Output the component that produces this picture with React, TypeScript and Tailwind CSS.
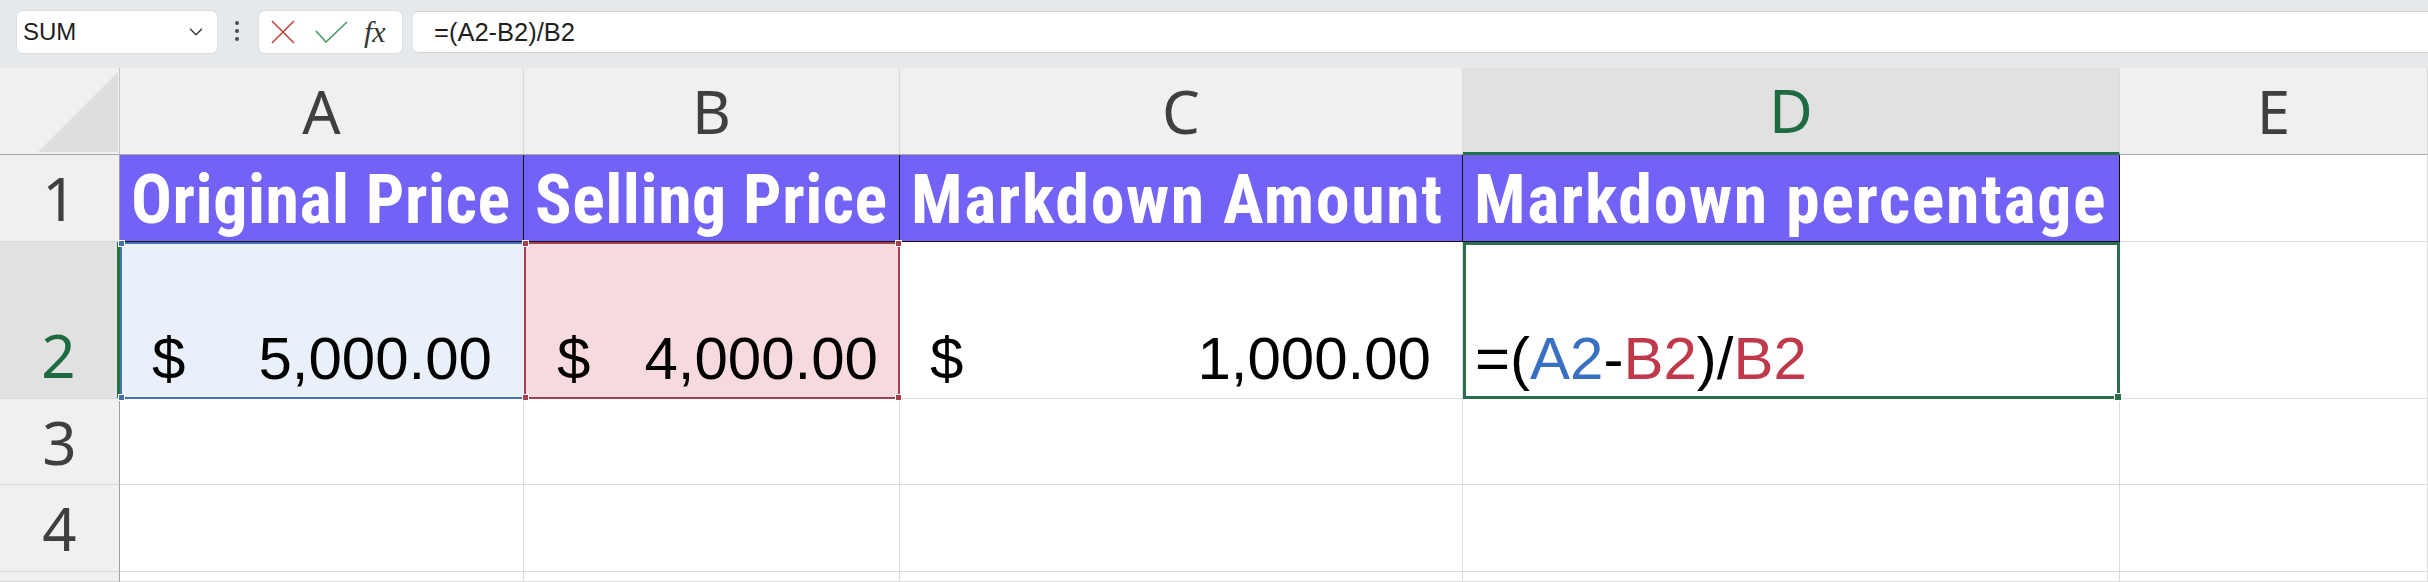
import React from 'react';
import { ChevronDown } from 'lucide-react';

const narrow = "font-['Roboto_Condensed','Roboto',sans-serif]";
const sans = "font-['Liberation_Sans',Arial,sans-serif]";
const ui = "font-['Noto_Sans',sans-serif]";

const Handle = ({ pos, color }: { pos: string; color: string }) => (
  <span className={`absolute z-10 h-[7px] w-[7px] border border-white ${pos} ${color}`} />
);

const ColHead = ({ label, active }: { label: string; active?: boolean }) => (
  <div
    className={`flex items-center justify-center border-r border-[#dadada] ${ui} text-[60px] leading-none ${
      active
        ? 'border-b-[3px] border-b-[#217346] bg-[#e1e1e1] text-[#1e6b42]'
        : 'border-b border-b-[#a8a8a8] bg-[#f0f0f0] text-[#3f3f3f]'
    }`}
  >
    {label}
  </div>
);

const RowHead = ({ label }: { label: string }) => (
  <div
    className={`flex items-center justify-center border-r border-b border-r-[#9e9e9e] border-b-[#d6d6d6] bg-[#f0f0f0] ${ui} text-[60px] leading-none text-[#3f3f3f]`}
  >
    {label}
  </div>
);

const Title = ({ text, wide }: { text: string; wide?: boolean }) => (
  <div
    className={`flex items-center overflow-hidden whitespace-nowrap border-r border-b border-[#141414] bg-[#7262f6] pl-[11px] pt-[4px] ${narrow} text-[68px] font-bold leading-none text-white ${
      wide ? 'tracking-[1.6px]' : 'tracking-[0.5px]'
    }`}
  >
    {text}
  </div>
);

const Blank = () => <div className="border-r border-b border-[#dcdcdc] bg-white" />;

export default function App() {
  return (
    <div className="h-[582px] w-[2428px] overflow-hidden bg-white">
      {/* formula bar */}
      <div className="flex h-[68px] items-start bg-[#e6e9eb] pt-[11px]">
        <div className="ml-[17px] flex h-[42px] w-[200px] items-center justify-between rounded-[6px] bg-white pl-[6px] pr-[10px] shadow-[0_0_0_1px_#dde0e3]">
          <span className={`${sans} text-[24px] text-[#1f1f1f]`}>SUM</span>
          <ChevronDown size={22} strokeWidth={1.6} className="text-[#3a3a3a]" />
        </div>
        <div className="ml-[18px] mt-[10px] flex flex-col gap-[4px]">
          <span className="h-[4px] w-[4px] rounded-full bg-[#4d4d4d]" />
          <span className="h-[4px] w-[4px] rounded-full bg-[#4d4d4d]" />
          <span className="h-[4px] w-[4px] rounded-full bg-[#4d4d4d]" />
        </div>
        <div className="ml-[20px] flex h-[42px] w-[143px] items-center rounded-[6px] bg-white pl-[12px] shadow-[0_0_0_1px_#dde0e3]">
          <svg width="24" height="24" viewBox="0 0 24 24" className="shrink-0">
            <path d="M1 1 L23 23 M23 1 L1 23" stroke="#c8433f" strokeWidth="1.6" fill="none" />
          </svg>
          <svg width="33" height="22" viewBox="0 0 33 22" className="ml-[20px] shrink-0">
            <path d="M1 10 L11 21 L32 1" stroke="#4b9a65" strokeWidth="1.6" fill="none" />
          </svg>
          <span className="ml-[16px] font-['Liberation_Serif',serif] text-[30px] italic leading-none text-[#333]">
            fx
          </span>
        </div>
        <div className="ml-[11px] flex h-[42px] flex-1 items-center rounded-l-[6px] border-y border-[#cfd2d5] bg-white pl-[21px]">
          <span className={`${sans} text-[25.5px] text-[#1f1f1f]`}>=(A2-B2)/B2</span>
        </div>
      </div>

      {/* grid */}
      <div className="grid grid-cols-[120px_404px_376px_563px_657px_308px] grid-rows-[87px_87px_157px_86px_87px_10px]">
        {/* column headers */}
        <div className="flex items-end justify-end border-r border-b border-r-[#c4c4c4] border-b-[#a8a8a8] bg-[#f0f0f0] pb-[2px] pr-[1px]">
          <svg width="80" height="80" viewBox="0 0 80 80">
            <polygon points="80,0 80,80 0,80" fill="#dedede" />
          </svg>
        </div>
        <ColHead label="A" />
        <ColHead label="B" />
        <ColHead label="C" />
        <ColHead label="D" active />
        <ColHead label="E" />

        {/* row 1 */}
        <RowHead label="1" />
        <Title text="Original Price" />
        <Title text="Selling Price" />
        <Title text="Markdown Amount" wide />
        <Title text="Markdown percentage" wide />
        <Blank />

        {/* row 2 */}
        <div
          className={`flex items-end justify-center border-r-[3px] border-b border-r-[#217346] border-b-[#d6d6d6] bg-[#e1e1e1] pb-[13px] ${ui} text-[60px] leading-none text-[#1e6b42]`}
        >
          2
        </div>
        <div
          className={`relative flex items-end justify-between border-2 border-r-0 border-[#4571a8] bg-[#eaf0fa] pb-[8px] pl-[30px] pr-[32px] ${sans} text-[60px] leading-none text-black`}
        >
          <Handle pos="-top-[4px] -left-[4px]" color="bg-[#4571a8]" />
          <Handle pos="-bottom-[4px] -left-[4px]" color="bg-[#4571a8]" />
          <span>$</span>
          <span>5,000.00</span>
        </div>
        <div
          className={`relative flex items-end justify-between border-2 border-[#a3404f] bg-[#f7dadd] pb-[8px] pl-[31px] pr-[20px] ${sans} text-[60px] leading-none text-black`}
        >
          <Handle pos="-top-[4px] -left-[4px]" color="bg-[#a3404f]" />
          <Handle pos="-bottom-[4px] -left-[4px]" color="bg-[#a3404f]" />
          <Handle pos="-top-[4px] -right-[4px]" color="bg-[#a3404f]" />
          <Handle pos="-bottom-[4px] -right-[4px]" color="bg-[#a3404f]" />
          <span>$</span>
          <span>4,000.00</span>
        </div>
        <div
          className={`flex items-end justify-between border-r border-b border-[#dcdcdc] bg-white pb-[9px] pl-[30px] pr-[31px] ${sans} text-[60px] leading-none text-black`}
        >
          <span>$</span>
          <span>1,000.00</span>
        </div>
        <div
          className={`relative flex items-end border-[3px] border-[#2a6e4c] bg-white pb-[7px] pl-[9px] ${sans} text-[60px] leading-none text-black`}
        >
          <span>
            =(<span className="text-[#3a70c4]">A2</span>-<span className="text-[#c0394b]">B2</span>)/
            <span className="text-[#c0394b]">B2</span>
          </span>
          <span className="absolute -bottom-[5px] -right-[5px] h-[8px] w-[8px] border border-white bg-[#2a6e4c]" />
        </div>
        <Blank />

        {/* rows 3-5 */}
        <RowHead label="3" />
        <Blank />
        <Blank />
        <Blank />
        <Blank />
        <Blank />

        <RowHead label="4" />
        <Blank />
        <Blank />
        <Blank />
        <Blank />
        <Blank />

        <RowHead label="" />
        <Blank />
        <Blank />
        <Blank />
        <Blank />
        <Blank />
      </div>
    </div>
  );
}
